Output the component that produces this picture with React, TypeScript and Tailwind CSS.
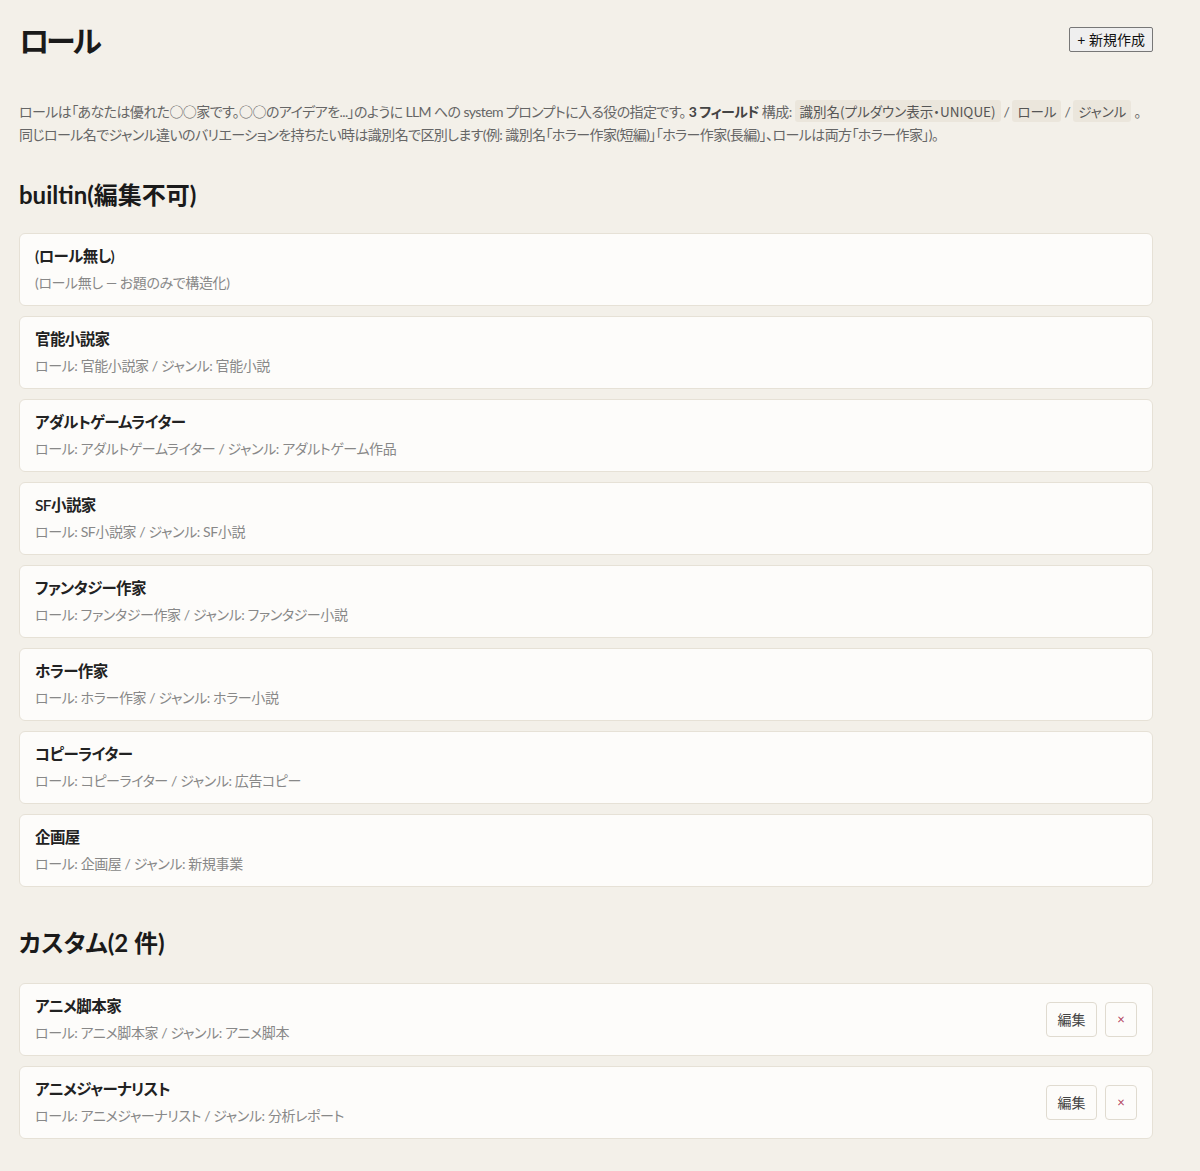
import React from "react";

type Role = { name: string; sub: string };

const builtin: Role[] = [
  { name: "(ロール無し)", sub: "(ロール無し — お題のみで構造化)" },
  { name: "官能小説家", sub: "ロール: 官能小説家 / ジャンル: 官能小説" },
  { name: "アダルトゲームライター", sub: "ロール: アダルトゲームライター / ジャンル: アダルトゲーム作品" },
  { name: "SF小説家", sub: "ロール: SF小説家 / ジャンル: SF小説" },
  { name: "ファンタジー作家", sub: "ロール: ファンタジー作家 / ジャンル: ファンタジー小説" },
  { name: "ホラー作家", sub: "ロール: ホラー作家 / ジャンル: ホラー小説" },
  { name: "コピーライター", sub: "ロール: コピーライター / ジャンル: 広告コピー" },
  { name: "企画屋", sub: "ロール: 企画屋 / ジャンル: 新規事業" },
];

const custom: Role[] = [
  { name: "アニメ脚本家", sub: "ロール: アニメ脚本家 / ジャンル: アニメ脚本" },
  { name: "アニメジャーナリスト", sub: "ロール: アニメジャーナリスト / ジャンル: 分析レポート" },
];

const font = "font-['Lato','Noto_Sans_CJK_JP',sans-serif] [font-feature-settings:'palt']";

function Code({ children }: { children: React.ReactNode }) {
  return (
    <code className="rounded-[3px] bg-[#ebe6dc] px-[5px] py-[1px] font-['Noto_Sans_CJK_JP',monospace] text-[13.5px] tracking-[0px] text-[#555] [font-feature-settings:'palt']">
      {children}
    </code>
  );
}

function Circle() {
  return <span className="font-['Noto_Sans_CJK_JP',sans-serif]">○○</span>;
}

function RoleCard({ role, editable }: { role: Role; editable?: boolean }) {
  return (
    <div className="flex h-[73px] items-center justify-between rounded-[6px] border border-[#e6e1d6] bg-[#fdfcfa] pl-[15px] pr-[15px]">
      <div className="flex flex-col">
        <div className="text-[15.5px] font-semibold leading-[20px] tracking-[-0.6px] text-[#222]">{role.name}</div>
        <div className="mt-[7px] text-[14px] leading-[20px] tracking-[-0.4px] text-[#888]">{role.sub}</div>
      </div>
      {editable && (
        <div className="flex items-center gap-[8px]">
          <button className="h-[35px] w-[51px] rounded-[4px] border border-[#e0dbd0] bg-[#fdfcfa] text-[14px] text-[#444]">
            編集
          </button>
          <button className="h-[35px] w-[32px] rounded-[4px] border border-[#e0dbd0] bg-[#fdfcfa] text-[13px] text-[#b0405a]">
            ×
          </button>
        </div>
      )}
    </div>
  );
}

export default function App() {
  return (
    <div className={`min-h-[1171px] bg-[#f3f0e9] ${font} text-[#222]`}>
      <div className="w-[1134px] ml-[19px] pt-[20px] pb-[32px]">
        <div className="flex items-start justify-between">
          <h1 className="text-[30px] font-bold leading-[40px] tracking-[-3px] text-[#1a1a1a]">ロール</h1>
          <button className="mt-[7px] h-[25px] rounded-[2px] border border-[#777] bg-[#efefef] px-[7px] text-[14px] leading-[20px] text-[#111]">
            + 新規作成
          </button>
        </div>
        <p className="mt-[40px] text-[14px] leading-[23px] tracking-[-0.6px] text-[#666]">
          ロールは「あなたは優れた<Circle />家です。<Circle />のアイデアを...」のように LLM への system プロンプトに入る役の指定です。{" "}
          <b className="font-bold text-[#444]">3 フィールド</b> 構成: <Code>識別名(プルダウン表示・UNIQUE)</Code> /{" "}
          <Code>ロール</Code> / <Code>ジャンル</Code> 。
          <br />
          同じロール名でジャンル違いのバリエーションを持ちたい時は識別名で区別します(例: 識別名「ホラー作家(短編)」「ホラー作家(長編)」、ロールは両方「ホラー作家」)。
        </p>
        <h2 className="mt-[33px] text-[24px] font-bold leading-[32px] text-[#1a1a1a]">builtin(編集不可)</h2>
        <div className="mt-[22px] flex flex-col gap-[10px]">
          {builtin.map((r) => (
            <RoleCard key={r.name} role={r} />
          ))}
        </div>
        <h2 className="mt-[40px] text-[24px] font-bold leading-[32px] text-[#1a1a1a]">カスタム(2 件)</h2>
        <div className="mt-[24px] flex flex-col gap-[10px]">
          {custom.map((r) => (
            <RoleCard key={r.name} role={r} editable />
          ))}
        </div>
      </div>
    </div>
  );
}
